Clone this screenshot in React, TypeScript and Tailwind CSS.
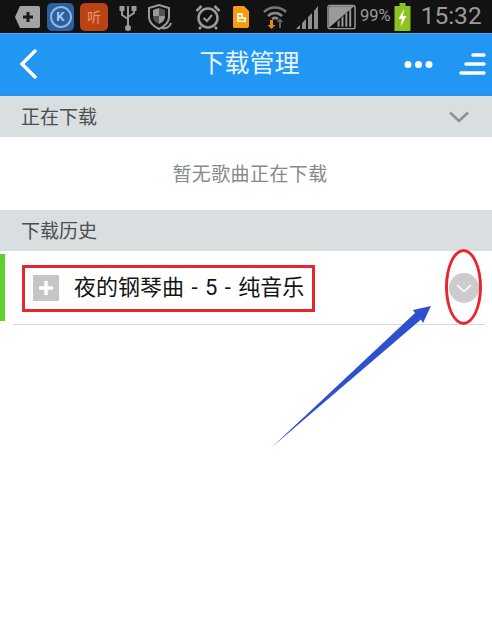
const cjk = "font-['Roboto','Noto_Sans_CJK_SC',sans-serif]";

function StatusIcons() {
  return (
    <div className="flex items-center">
      {/* notification tag */}
      <svg width="26" height="26" viewBox="0 0 26 26" className="ml-[14px]">
        <path d="M6 2h18a2 2 0 0 1 2 2v18a2 2 0 0 1-2 2H6l-5-11z" fill="#a3a3a3" />
        <path d="M14 8v10M9 13h10" stroke="#1a1a1a" strokeWidth="3" />
      </svg>
      {/* K app */}
      <div className="ml-[7px] flex h-[28px] w-[27px] items-center justify-center rounded-[5px] bg-[#2c5f9e]">
        <div className="flex h-[22px] w-[22px] items-center justify-center rounded-full border-2 border-[#8db8e0] text-[13px] leading-none font-bold text-[#a9cdee]">K</div>
      </div>
      {/* listen app */}
      <div className="ml-[6px] flex h-[28px] w-[28px] items-center justify-center rounded-[5px] bg-[#bb4313] text-[14px] leading-none text-[#e39a78]">听</div>
      {/* usb */}
      <svg width="18" height="28" viewBox="0 0 18 28" className="ml-[11px]" fill="none" stroke="#9a9a9a" strokeWidth="2">
        <path d="M9 3v23M3 6v6l6 4M15 6v4l-6 4" />
        <circle cx="9" cy="25" r="2" fill="#9a9a9a" />
        <rect x="1.5" y="4" width="3" height="3" fill="#9a9a9a" />
        <rect x="13.5" y="4" width="3" height="3" fill="#9a9a9a" />
      </svg>
      {/* shield */}
      <svg width="26" height="28" viewBox="0 0 26 28" className="ml-[10px]" fill="none">
        <path d="M12 2l10 3v9c0 6-4 9-10 12C6 23 2 20 2 14V5z" stroke="#9a9a9a" strokeWidth="2" />
        <path d="M6 7l6-2v8H6zM12 13h6c0 4-2 6-6 8z" fill="#9a9a9a" />
        <path d="M12 5l6 2v6h-6zM6 13h6v8c-4-2-6-4-6-8z" fill="#555" />
        <path d="M15 25c4 1 8-1 9-5" stroke="#9a9a9a" strokeWidth="2" />
      </svg>
      {/* alarm */}
      <svg width="26" height="26" viewBox="0 0 26 26" className="ml-[22px]" fill="none" stroke="#9a9a9a">
        <circle cx="13" cy="14" r="9.5" strokeWidth="2.5" />
        <path d="M8.5 14l3.5 3 5-6" strokeWidth="2" />
        <path d="M1.5 7l5-5M24.5 7l-5-5M6 23l-2 2M20 23l2 2" strokeWidth="2.5" />
      </svg>
      {/* orange file */}
      <svg width="18" height="24" viewBox="0 0 18 24" className="ml-[11px]">
        <path d="M2 1h10l5 5v15a2 2 0 0 1-2 2H2a2 2 0 0 1-1-1V2z" fill="#f59d0e" />
        <path d="M5 8h6v4h3v5H5z" fill="#fff1cf" />
        <path d="M7 10h2v2H7zM7 14h5v1.500H7z" fill="#f59d0e" />
      </svg>
      {/* wifi */}
      <svg width="24" height="28" viewBox="0 0 24 28" className="ml-[13px]" fill="none">
        <path d="M1 9c6-6 16-6 22 0" stroke="#777" strokeWidth="2.500" />
        <path d="M5 13c4-4 10-4 14 0" stroke="#8a8a8a" strokeWidth="2.500" />
        <path d="M9 16c2-1.500 4-1.500 6 0" stroke="#8a8a8a" strokeWidth="2.500" />
        <path d="M7 17h3v5h2.500l-4 4-4-4H7z" fill="#e8851a" />
        <path d="M16 25v-6h-2.500l3.500-3.500 3.500 3.500H18v6z" fill="#666" />
      </svg>
      {/* signal 1 */}
      <svg width="23" height="24" viewBox="0 0 23 24" className="ml-[9px]" fill="#8e8e8e">
        <path d="M0 24l4-4v4zM6 24v-6l4-4v10zM12 24V12l4-4v16zM18 24V6l4-5v23z" />
      </svg>
      {/* signal 2 */}
      <svg width="29" height="26" viewBox="0 0 30 26" className="ml-[8px]">
        <rect x="1" y="1" width="28" height="24" rx="2" fill="#111" stroke="#9a9a9a" strokeWidth="1.500" />
        <path d="M2 24L28 2H4a2 2 0 0 0-2 2z" fill="#9a9a9a" />
        <path d="M11 23v-5l2-2v7zM15 23v-9l2-2v11zM19 23V10l2-2v15zM23 23V6l2-2v19z" fill="#9a9a9a" />
      </svg>
      <span className="ml-[4px] text-[16.500px] leading-none text-[#9a9a9a]">99%</span>
      {/* battery */}
      <svg width="17" height="28" viewBox="0 0 16 28" className="ml-[3px]">
        <rect x="5" y="0" width="6" height="3" fill="#8dc21f" />
        <rect x="0" y="3" width="16" height="25" fill="#8dc21f" />
        <path d="M9.500 6L4 16h3.500L6 24l6-11H8.500z" fill="#fff" />
      </svg>
      <span className="ml-[10px] text-[24.500px] leading-none text-[#9b9b9b]">15:32</span>
    </div>
  );
}

function SectionHeader({ title, chevron }: { title: string; chevron?: boolean }) {
  return (
    <div className="flex h-[41px] items-center justify-between bg-[#d9dee1] pr-[23px] pl-[21px]">
      <span className="pt-[3px] text-[19px] text-[#4a4f52]">{title}</span>
      {chevron && (
        <svg width="20" height="12" viewBox="0 0 20 12" fill="none" stroke="#8d9295" strokeWidth="2.500">
          <path d="M1 1.500l9 8.500 9-8.500" />
        </svg>
      )}
    </div>
  );
}

export default function App() {
  return (
    <div className={`relative h-[641px] w-[492px] overflow-hidden bg-white ${cjk}`}>
      <div className="flex h-[33px] items-center bg-[#121212]">
        <StatusIcons />
      </div>

      <div className="flex h-[63px] items-center justify-between border-t border-b-2 border-t-[#4aa8f5] border-b-[#2a8fe6] bg-[#2196f3] pr-[5px] pl-[19px]">
        <svg width="18" height="30" viewBox="0 0 18 30" fill="none" stroke="#fff" strokeWidth="3.500" strokeLinecap="round">
          <path d="M16 2L3 15l13 13" />
        </svg>
        <span className="ml-[58px] text-[25px] text-[#e9f5fe]">下载管理</span>
        <div className="flex items-center">
          <svg width="29" height="9" viewBox="0 0 29 9" fill="#fff">
            <circle cx="4" cy="4.500" r="3.500" />
            <circle cx="14.500" cy="4.500" r="3.500" />
            <circle cx="25" cy="4.500" r="3.500" />
          </svg>
          <svg width="27" height="22" viewBox="0 0 27 22" fill="none" stroke="#fff" strokeWidth="3.500" strokeLinecap="round" className="mr-[1px] ml-[26px]">
            <path d="M14 2h11M7 11h18M2 20h23" />
          </svg>
        </div>
      </div>

      <SectionHeader title="正在下载" chevron />
      <div className="flex h-[73px] items-center justify-center text-[19px] tracking-[0.4px] text-[#85898b]">
        <span className="ml-[8px] pt-[4px]">暂无歌曲正在下载</span>
      </div>
      <SectionHeader title="下载历史" />

      <div className="relative h-[74px]">
        <div className="absolute top-[3px] left-0 h-[67px] w-[5px] bg-[#5fd02e]" />
        <div className="mr-[7px] ml-[13px] flex h-[74px] items-center border-b border-[#d8d8d8]">
          <div className="ml-[20px] flex h-[26px] w-[26px] items-center justify-center bg-[#c6c6c6]">
            <svg width="14" height="14" viewBox="0 0 14 14" stroke="#fff" strokeWidth="3.500">
              <path d="M7 0v14M0 7h14" />
            </svg>
          </div>
          <span className="ml-[15px] text-[22px] whitespace-nowrap text-[#141414] [word-spacing:2px]">夜的钢琴曲 - 5 - 纯音乐</span>
          <div className="absolute top-[22px] left-[449px] flex h-[30px] w-[30px] items-center justify-center rounded-full bg-[#cccccc]">
            <svg width="16" height="9" viewBox="0 0 16 9" fill="none" stroke="#fff" strokeWidth="1.500">
              <path d="M1 1l7 6.500L15 1" />
            </svg>
          </div>
        </div>
      </div>

      {/* annotations drawn over the screenshot */}
      <div className="absolute top-[265px] left-[22px] h-[47px] w-[293px] border-[3px] border-[#e8262e]" />
      <div className="absolute top-[249px] left-[445px] h-[76px] w-[37px] rounded-[50%] border-[3px] border-[#e8262e]" />
      <svg width="170" height="150" viewBox="0 0 170 150" className="absolute top-[302px] left-[268px]">
        <path d="M4 145L147 11 145 8 163 4 155 21 153 17.500z" fill="#2e50cf" />
      </svg>
    </div>
  );
}
